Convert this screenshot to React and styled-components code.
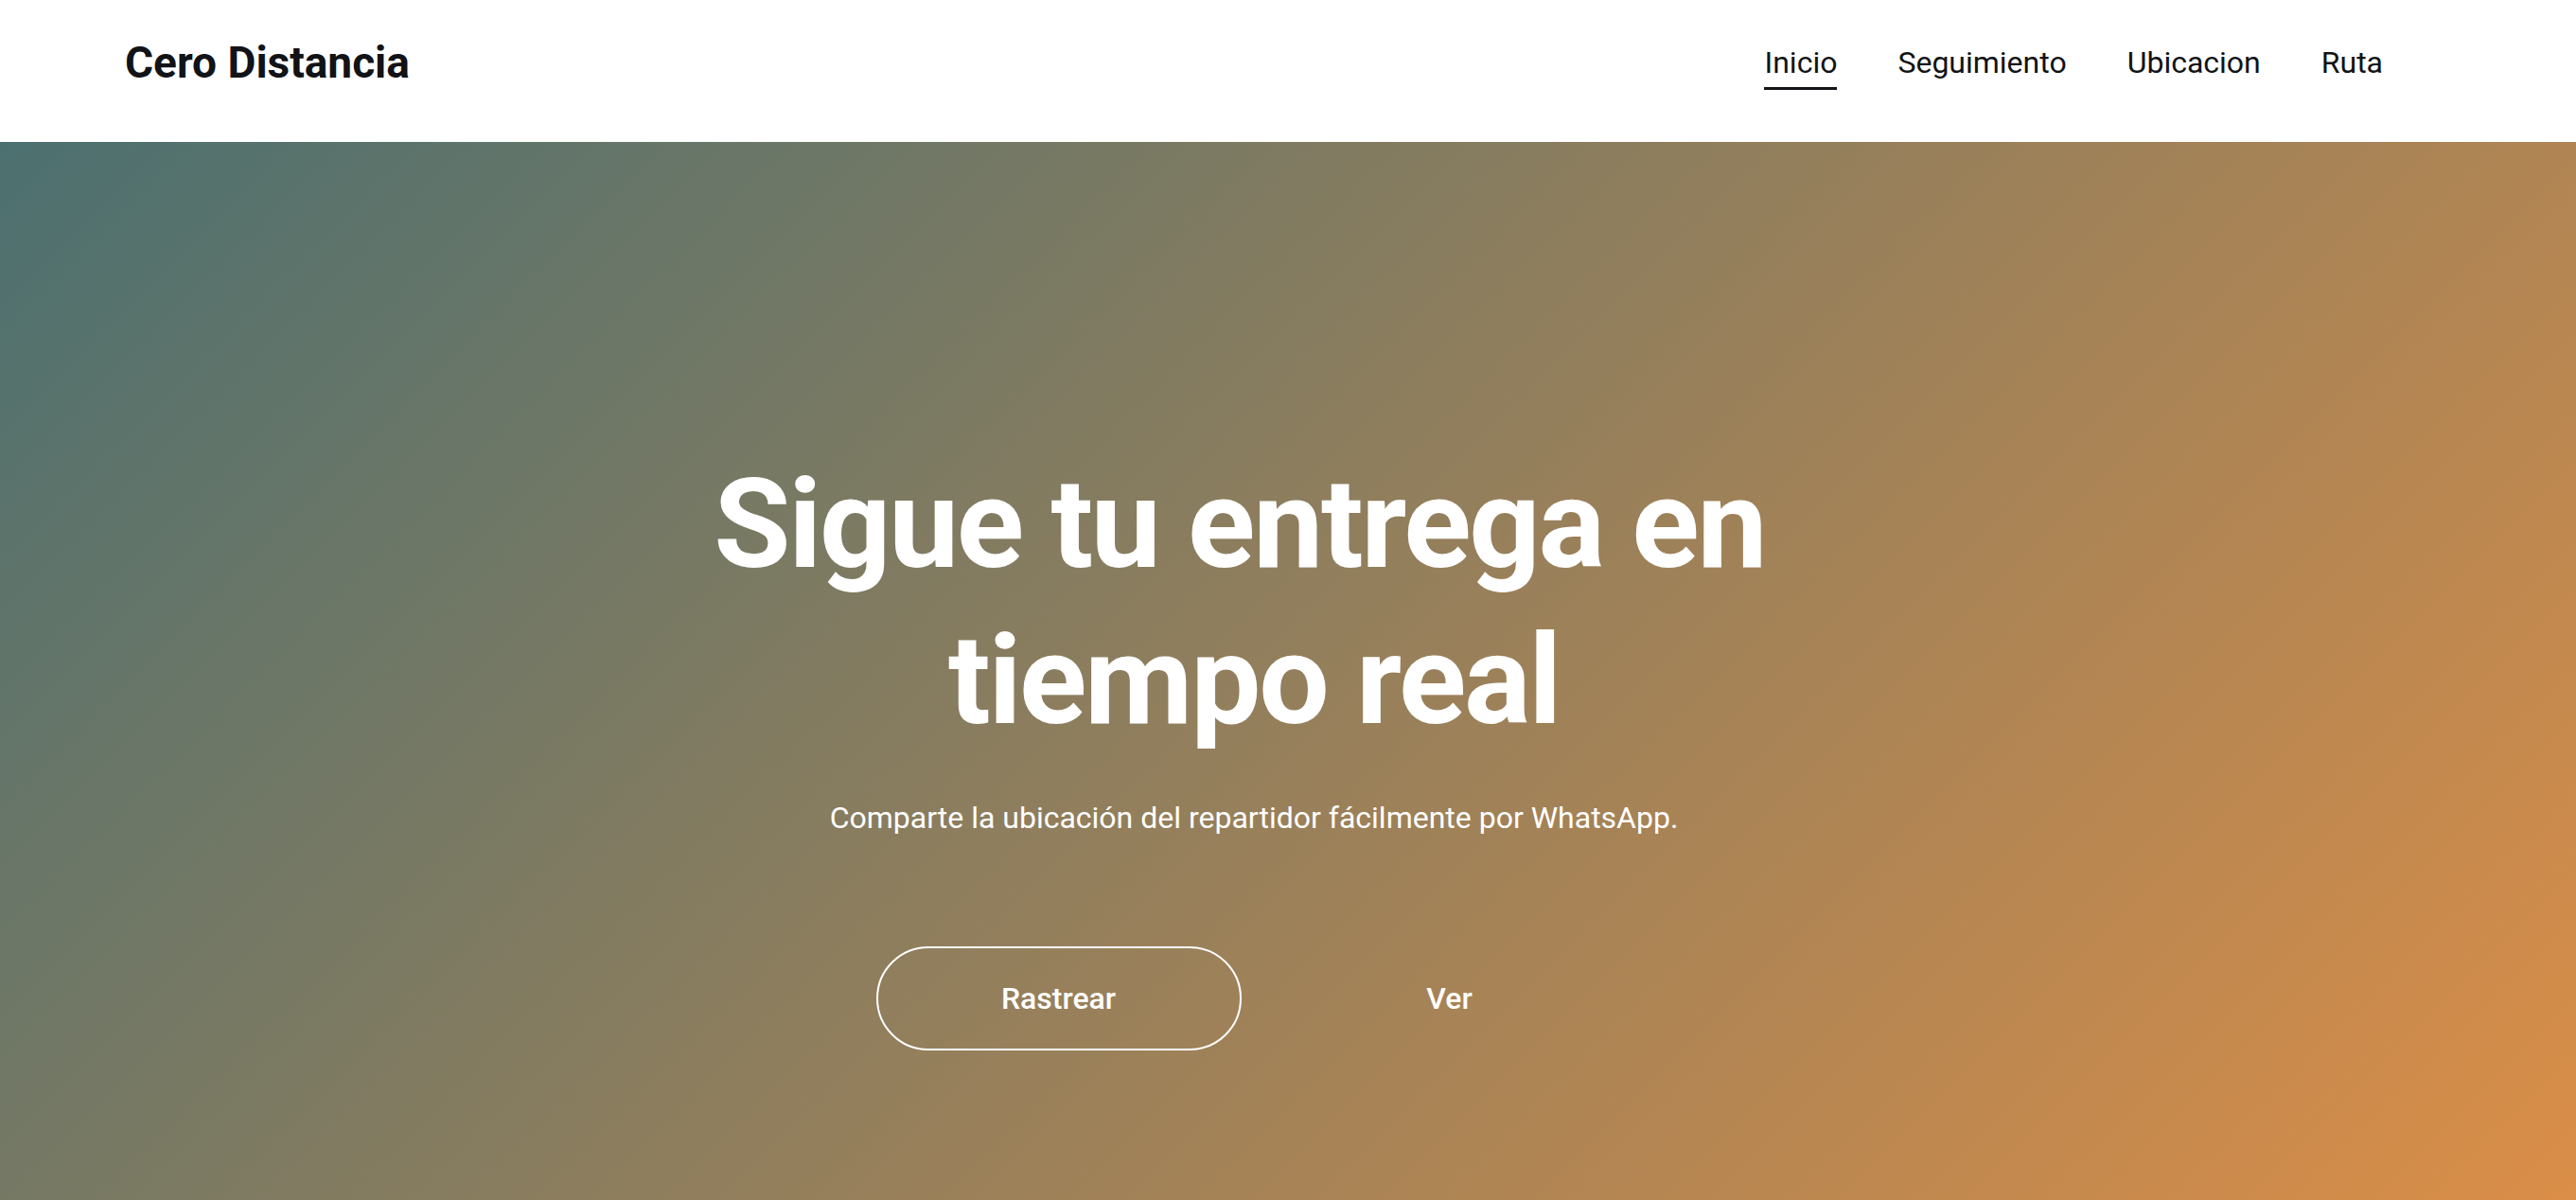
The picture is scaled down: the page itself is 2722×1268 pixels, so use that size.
import React from "react";
import styled, { createGlobalStyle } from "styled-components";

const GlobalStyle = createGlobalStyle`
  * {
    box-sizing: border-box;
  }
  html,
  body {
    margin: 0;
    padding: 0;
    font-family: Roboto, "Liberation Sans", sans-serif;
    background: #fff;
  }
`;

const Header = styled.header`
  height: 150px;
  padding: 0 204px 18px 132px;
  display: flex;
  align-items: center;
  justify-content: space-between;
  background: #fff;
`;

const Logo = styled.a`
  font-size: 46px;
  font-weight: 700;
  color: #111317;
  text-decoration: none;
`;

const Nav = styled.nav`
  display: flex;
  align-items: center;
  gap: 64px;
`;

const NavLink = styled.a`
  position: relative;
  font-size: 32px;
  font-weight: 400;
  color: #111317;
  text-decoration: none;
  &:after {
    content: "";
    position: absolute;
    left: 0;
    right: 0;
    bottom: -10px;
    height: 3px;
    background: #111317;
    display: ${(p) => (p.$active ? "block" : "none")};
  }
`;

const Hero = styled.section`
  min-height: 100vh;
  padding: 14px 72px 0 0;
  display: flex;
  flex-direction: column;
  align-items: center;
  justify-content: center;
  text-align: center;
  color: #fff;
  background: linear-gradient(135deg, #4c7070 0%, #e08f46 100%);
`;

const Title = styled.h1`
  margin: 0;
  font-size: 132px;
  font-weight: 700;
  line-height: 165px;
  letter-spacing: -0.017em;
`;

const Lead = styled.p`
  margin: 39px 0 0;
  font-size: 32px;
  line-height: 46px;
  font-weight: 400;
`;

const Actions = styled.div`
  margin-top: 113px;
  display: flex;
  gap: 27px;
`;

const Button = styled.a`
  width: 386px;
  height: 110px;
  display: flex;
  align-items: center;
  justify-content: center;
  border: 2px solid ${(p) => (p.$outline ? "#fff" : "transparent")};
  border-radius: 999px;
  font-size: 32px;
  font-weight: 500;
  color: #fff;
  text-decoration: none;
`;

const links = ["Inicio", "Seguimiento", "Ubicacion", "Ruta"];

const App = () => {
  return (
    <>
      <GlobalStyle />
      <Header>
        <Logo href="/">Cero Distancia</Logo>
        <Nav>
          {links.map((l, i) => (
            <NavLink key={l} href="/" $active={i === 0}>
              {l}
            </NavLink>
          ))}
        </Nav>
      </Header>
      <Hero>
        <Title>
          Sigue tu entrega en{"\u00a0"}
          <br />
          tiempo real
        </Title>
        <Lead>Comparte la ubicación del repartidor fácilmente por WhatsApp.</Lead>
        <Actions>
          <Button href="/" $outline>
            Rastrear
          </Button>
          <Button href="/">Ver</Button>
        </Actions>
      </Hero>
    </>
  );
};

export default App;
